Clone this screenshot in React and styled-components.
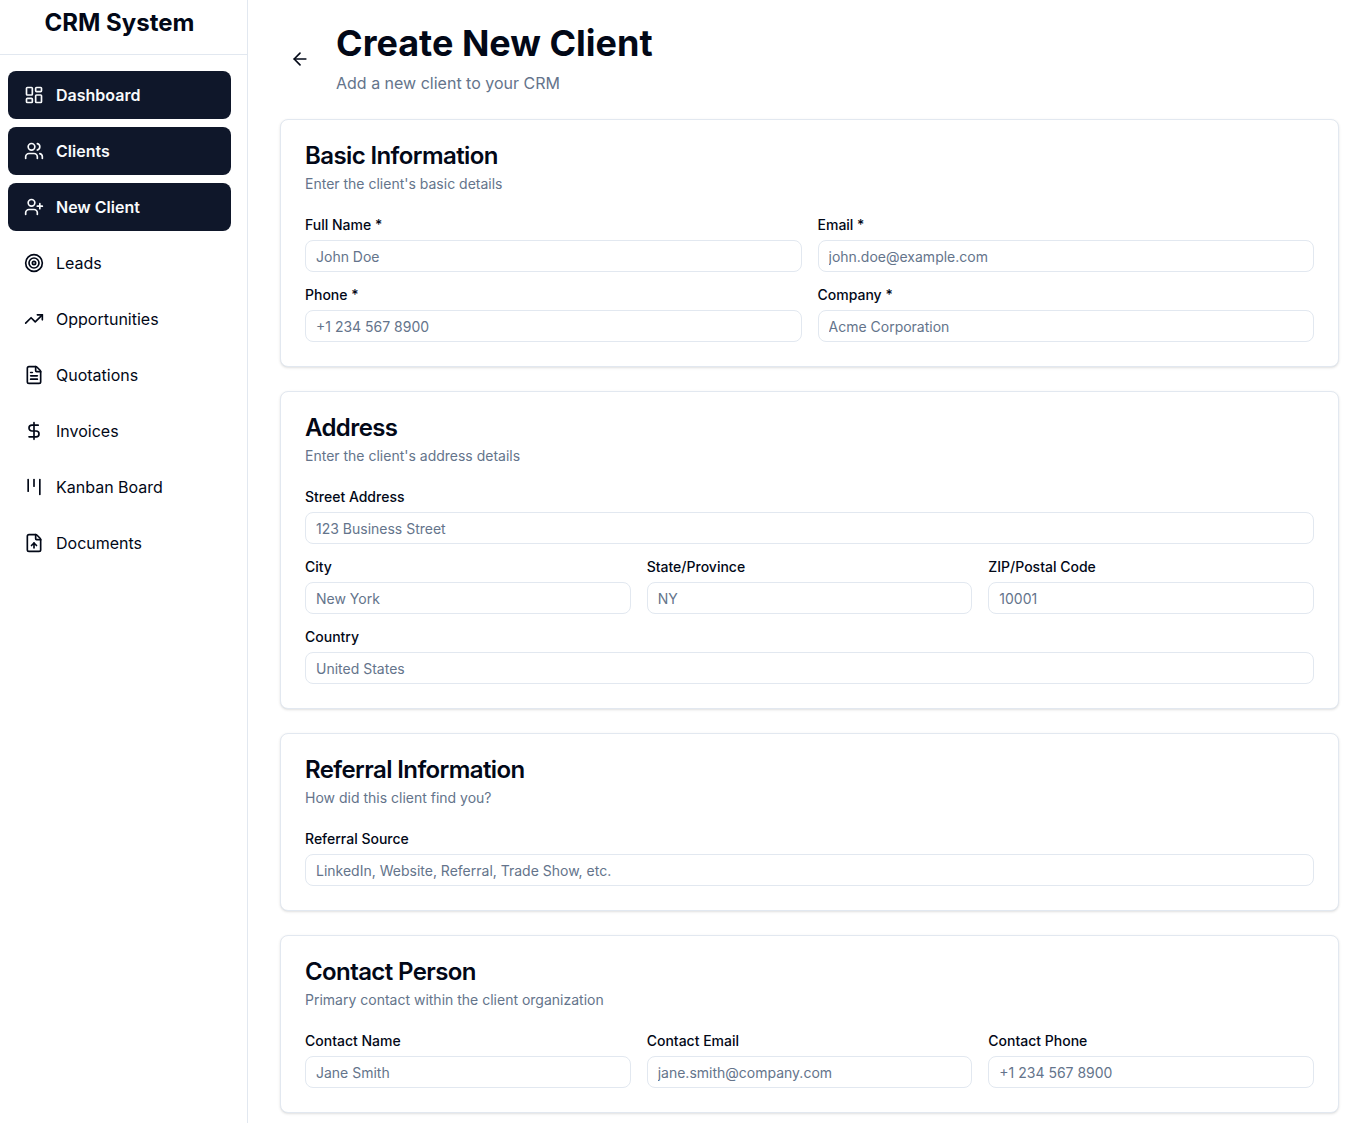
import React, { useId } from "react";
import styled, { createGlobalStyle } from "styled-components";
import {
  ArrowLeft,
  DollarSign,
  FileText,
  FileUp,
  Kanban,
  LayoutDashboard,
  Target,
  TrendingUp,
  UserPlus,
  Users,
} from "lucide-react";

const GlobalStyle = createGlobalStyle`
  *, *::before, *::after { box-sizing: border-box; }
  body {
    margin: 0;
    background: #ffffff;
    color: #020817;
    font-family: Inter, "Liberation Sans", sans-serif;
    font-size: 16px;
    line-height: 24px;
  }
  h1, h2, p { margin: 0; }
`;

const Layout = styled.div`
  display: flex;
  min-height: 100vh;
`;

const Sidebar = styled.aside`
  flex: 0 0 248px;
  border-right: 1px solid #e2e8f0;
`;

const Brand = styled.div`
  padding: 7px 8px 15px 0;
  border-bottom: 1px solid #e2e8f0;
  font-size: 24px;
  font-weight: 700;
  line-height: 32px;
  text-align: center;
`;

const Nav = styled.nav`
  display: flex;
  flex-direction: column;
  gap: 8px;
  padding: 16px 16px 16px 8px;
`;

const NavLink = styled.a`
  display: flex;
  align-items: center;
  gap: 12px;
  padding: 12px 16px;
  border-radius: 8px;
  text-decoration: none;
  color: ${(p) => (p.$active ? "#f8fafc" : "#020817")};
  background: ${(p) => (p.$active ? "#0f172a" : "transparent")};
  font-weight: ${(p) => (p.$active ? 600 : 400)};
`;

const Main = styled.main`
  flex: 1;
  min-width: 0;
  padding: 23px 15px 8px 32px;
`;

const Form = styled.form`
  display: flex;
  flex-direction: column;
  gap: 24px;
`;

const PageHeader = styled.header`
  display: flex;
  align-items: center;
  gap: 16px;
  margin-bottom: 24px;
`;

const BackButton = styled.button`
  display: flex;
  align-items: center;
  justify-content: center;
  width: 40px;
  height: 40px;
  padding: 0;
  border: 0;
  border-radius: 8px;
  background: transparent;
  color: inherit;
`;

const PageTitle = styled.h1`
  font-size: 36px;
  font-weight: 700;
  line-height: 40px;
`;

const PageSubtitle = styled.p`
  margin-top: 8px;
  color: #64748b;
`;

const Card = styled.section`
  padding: 24px;
  border: 1px solid #e2e8f0;
  border-radius: 8px;
  background: #ffffff;
  box-shadow: 0 1px 3px rgba(0, 0, 0, 0.1), 0 1px 2px -1px rgba(0, 0, 0, 0.1);
`;

const CardTitle = styled.h2`
  font-size: 24px;
  font-weight: 600;
  line-height: 24px;
  letter-spacing: -0.025em;
`;

const CardText = styled.p`
  margin: 6px 0 24px;
  color: #64748b;
  font-size: 14px;
  line-height: 20px;
`;

const Rows = styled.div`
  display: flex;
  flex-direction: column;
  gap: 16px;
`;

const Row = styled.div`
  display: grid;
  grid-template-columns: repeat(${(p) => p.$columns}, minmax(0, 1fr));
  gap: 16px;
`;

const FieldBox = styled.div`
  display: flex;
  flex-direction: column;
  gap: 8px;
`;

const Label = styled.label`
  font-size: 14px;
  font-weight: 500;
  line-height: 14px;
`;

const Input = styled.input`
  width: 100%;
  height: 32px;
  padding: 4px 10px;
  border: 1px solid #e2e8f0;
  border-radius: 8px;
  background: #ffffff;
  color: inherit;
  font-family: inherit;
  font-size: 14px;
  line-height: 20px;

  &::placeholder {
    color: #64748b;
    opacity: 1;
  }
`;

const navItems = [
  { label: "Dashboard", icon: LayoutDashboard, active: true },
  { label: "Clients", icon: Users, active: true },
  { label: "New Client", icon: UserPlus, active: true },
  { label: "Leads", icon: Target },
  { label: "Opportunities", icon: TrendingUp },
  { label: "Quotations", icon: FileText },
  { label: "Invoices", icon: DollarSign },
  { label: "Kanban Board", icon: Kanban },
  { label: "Documents", icon: FileUp },
];

const sections = [
  {
    title: "Basic Information",
    text: "Enter the client's basic details",
    rows: [
      [
        { label: "Full Name *", placeholder: "John Doe" },
        { label: "Email *", placeholder: "john.doe@example.com", type: "email" },
      ],
      [
        { label: "Phone *", placeholder: "+1 234 567 8900", type: "tel" },
        { label: "Company *", placeholder: "Acme Corporation" },
      ],
    ],
  },
  {
    title: "Address",
    text: "Enter the client's address details",
    rows: [
      [{ label: "Street Address", placeholder: "123 Business Street" }],
      [
        { label: "City", placeholder: "New York" },
        { label: "State/Province", placeholder: "NY" },
        { label: "ZIP/Postal Code", placeholder: "10001" },
      ],
      [{ label: "Country", placeholder: "United States" }],
    ],
  },
  {
    title: "Referral Information",
    text: "How did this client find you?",
    rows: [
      [{ label: "Referral Source", placeholder: "LinkedIn, Website, Referral, Trade Show, etc." }],
    ],
  },
  {
    title: "Contact Person",
    text: "Primary contact within the client organization",
    rows: [
      [
        { label: "Contact Name", placeholder: "Jane Smith" },
        { label: "Contact Email", placeholder: "jane.smith@company.com", type: "email" },
        { label: "Contact Phone", placeholder: "+1 234 567 8900", type: "tel" },
      ],
    ],
  },
];

function Field({ label, placeholder, type = "text" }) {
  const id = useId();
  return (
    <FieldBox>
      <Label htmlFor={id}>{label}</Label>
      <Input id={id} type={type} placeholder={placeholder} />
    </FieldBox>
  );
}

export default function App() {
  return (
    <>
      <GlobalStyle />
      <Layout>
        <Sidebar>
          <Brand>CRM System</Brand>
          <Nav>
            {navItems.map(({ label, icon: Icon, active }) => (
              <NavLink key={label} href="#" $active={active}>
                <Icon size={20} />
                {label}
              </NavLink>
            ))}
          </Nav>
        </Sidebar>
        <Main>
          <PageHeader>
            <BackButton type="button" aria-label="Back">
              <ArrowLeft size={20} />
            </BackButton>
            <div>
              <PageTitle>Create New Client</PageTitle>
              <PageSubtitle>Add a new client to your CRM</PageSubtitle>
            </div>
          </PageHeader>
          <Form>
            {sections.map((section) => (
              <Card key={section.title}>
                <CardTitle>{section.title}</CardTitle>
                <CardText>{section.text}</CardText>
                <Rows>
                  {section.rows.map((fields) => (
                    <Row key={fields[0].label} $columns={fields.length}>
                      {fields.map((field) => (
                        <Field key={field.label} {...field} />
                      ))}
                    </Row>
                  ))}
                </Rows>
              </Card>
            ))}
          </Form>
        </Main>
      </Layout>
    </>
  );
}
